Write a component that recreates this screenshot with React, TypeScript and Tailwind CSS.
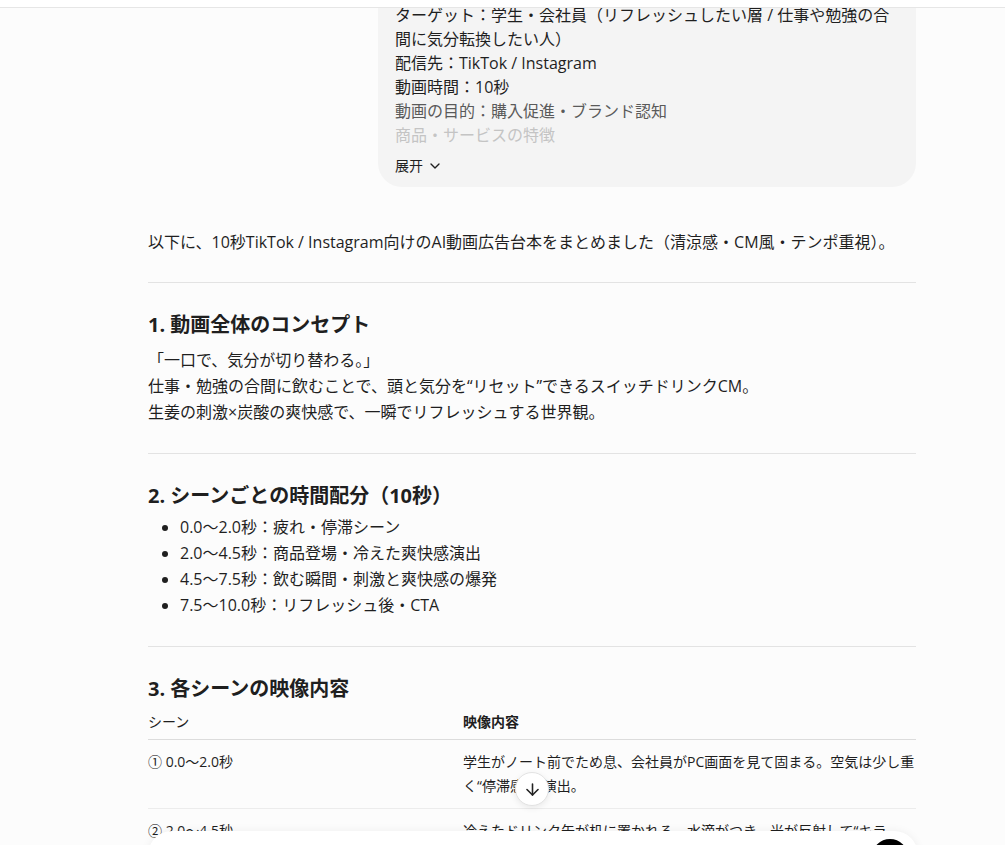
import { ArrowDown, ChevronDown } from 'lucide-react'

const BRIEF = [
  { text: 'ターゲット：学生・会社員（リフレッシュしたい層 / 仕事や勉強の合間に気分転換したい人）', tone: 'text-[#1f1f1f]' },
  { text: '配信先：TikTok / Instagram', tone: 'text-[#1f1f1f]' },
  { text: '動画時間：10秒', tone: 'text-[#1f1f1f]' },
  { text: '動画の目的：購入促進・ブランド認知', tone: 'text-[#5a5a5a]' },
  { text: '商品・サービスの特徴', tone: 'text-[#c4c4c4]' },
]

const TIMING = [
  '0.0〜2.0秒：疲れ・停滞シーン',
  '2.0〜4.5秒：商品登場・冷えた爽快感演出',
  '4.5〜7.5秒：飲む瞬間・刺激と爽快感の爆発',
  '7.5〜10.0秒：リフレッシュ後・CTA',
]

const SCENES = [
  { scene: '① 0.0〜2.0秒', body: '学生がノート前でため息、会社員がPC画面を見て固まる。空気は少し重く“停滞感”を演出。' },
  { scene: '② 2.0〜4.5秒', body: '冷えたドリンク缶が机に置かれる。水滴がつき、光が反射して“キラッ”と輝く。' },
]

const font = '[font-family:"Open_Sans","Noto_Sans_CJK_JP",sans-serif]'

export default function App() {
  return (
    <div className={`relative h-[845px] overflow-hidden bg-[#fcfcfc] text-[#1f1f1f] ${font}`}>
      {/* sticky top bar */}
      <div className="absolute inset-x-0 top-0 z-20 h-[8px] border-b border-[#e6e6e6] bg-white" />

      <div className="pl-[148px] w-[916px]">
        {/* user message */}
        <div className="flex justify-end">
          <div className="w-[538px] rounded-b-[24px] bg-[#f4f4f4] pl-[17px] pr-5 pt-[3px] pb-[9px] text-base leading-6">
            {BRIEF.map((l) => (
              <p key={l.text} className={l.tone}>{l.text}</p>
            ))}
            <button className="mt-[7px] flex items-center gap-1 text-sm leading-6 text-[#1f1f1f]">
              展开
              <ChevronDown className="w-4 h-4" strokeWidth={2} />
            </button>
          </div>
        </div>

        {/* assistant reply */}
        <p className="mt-[42px] text-base leading-[26px]">
          以下に、10秒TikTok / Instagram向けのAI動画広告台本をまとめました（清涼感・CM風・テンポ重視）。
        </p>

        <hr className="mt-[27px] border-[#e3e3e3]" />

        <h3 className="mt-[28px] text-xl leading-7 font-bold">1. 動画全体のコンセプト</h3>
        <div className="mt-2 text-base leading-[26px]">
          <p>「一口で、気分が切り替わる。」</p>
          <p>仕事・勉強の合間に飲むことで、頭と気分を“リセット”できるスイッチドリンクCM。</p>
          <p>生姜の刺激×炭酸の爽快感で、一瞬でリフレッシュする世界観。</p>
        </div>

        <hr className="mt-[28px] border-[#e3e3e3]" />

        <h3 className="mt-[28px] text-xl leading-7 font-bold">2. シーンごとの時間配分（10秒）</h3>
        <ul className="mt-1 list-disc pl-8 text-base leading-[26px]">
          {TIMING.map((t) => (
            <li key={t}>{t}</li>
          ))}
        </ul>

        <hr className="mt-[28px] border-[#e3e3e3]" />

        <h3 className="mt-[28px] text-xl leading-7 font-bold">3. 各シーンの映像内容</h3>
        <table className="mt-[9px] w-full text-sm">
          <thead>
            <tr className="border-b border-[#dcdcdc]">
              <th className="w-[315px] pb-[7px] text-left font-normal leading-5">シーン</th>
              <th className="pb-[7px] text-left font-bold leading-5">映像内容</th>
            </tr>
          </thead>
          <tbody>
            {SCENES.map((s) => (
              <tr key={s.scene} className="border-b border-[#ececec]">
                <td className="pt-[10px] pb-[10px] align-top leading-6">{s.scene}</td>
                <td className="pt-[10px] pb-[10px] align-top leading-6">{s.body}</td>
              </tr>
            ))}
          </tbody>
        </table>
      </div>

      {/* scroll to bottom */}
      <button className="absolute left-[515px] top-[772px] z-10 flex h-[34px] w-[34px] items-center justify-center rounded-full border border-[#e3e3e3] bg-white shadow-[0_2px_6px_rgba(0,0,0,0.08)]">
        <ArrowDown className="w-[19px] h-[19px] text-[#222]" strokeWidth={2} />
      </button>

      {/* composer */}
      <div className="absolute left-[148px] top-[831px] z-10 h-[80px] w-[770px] rounded-[24px] bg-white shadow-[0_0_10px_rgba(0,0,0,0.06)]">
        <div className="absolute right-[10px] top-[8px] h-[36px] w-[36px] rounded-full bg-black" />
      </div>
    </div>
  )
}
